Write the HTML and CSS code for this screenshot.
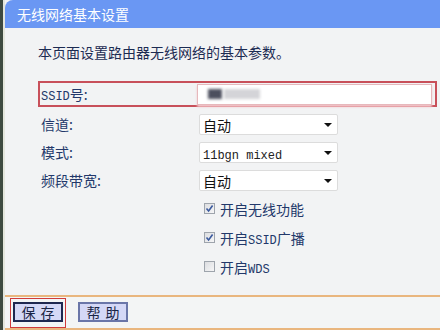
FILE: index.html
```html
<!DOCTYPE html>
<html lang="zh-CN">
<head>
    <meta charset="UTF-8">
    <meta name="viewport" content="width=device-width, initial-scale=1.0">
    <title>无线网络基本设置</title>
    <link rel="stylesheet" href="styles.css">
</head>
<body>
    <div class="frame">
        <div class="panel">
            <div class="panel-head">无线网络基本设置</div>

            <div class="panel-body">
                <p class="intro">本页面设置路由器无线网络的基本参数。</p>

                <!-- SSID -->
                <div class="row ssid-row">
                    <span class="label"><span class="latin">SSID</span>号:</span>
                    <div class="ssid-input">
                        <span class="blur blur-dark"></span>
                        <span class="blur blur-light"></span>
                    </div>
                </div>

                <!-- Selects -->
                <div class="row">
                    <span class="label">信道:</span>
                    <div class="select">自动<span class="caret"></span></div>
                </div>
                <div class="row">
                    <span class="label">模式:</span>
                    <div class="select"><span class="latin">11bgn mixed</span><span class="caret"></span></div>
                </div>
                <div class="row">
                    <span class="label">频段带宽:</span>
                    <div class="select">自动<span class="caret"></span></div>
                </div>

                <!-- Checkboxes -->
                <div class="row check-row">
                    <span class="label"></span>
                    <label class="check">
                        <span class="box"><svg width="9" height="9" viewBox="0 0 9 9"><path d="M1.5 4.5 L3.6 7 L7.6 1.5" fill="none" stroke="#3b5a9e" stroke-width="1.6"/></svg></span>
                        <span>开启无线功能</span>
                    </label>
                </div>
                <div class="row check-row">
                    <span class="label"></span>
                    <label class="check">
                        <span class="box"><svg width="9" height="9" viewBox="0 0 9 9"><path d="M1.5 4.5 L3.6 7 L7.6 1.5" fill="none" stroke="#3b5a9e" stroke-width="1.6"/></svg></span>
                        <span>开启<span class="latin">SSID</span>广播</span>
                    </label>
                </div>
                <div class="row check-row">
                    <span class="label"></span>
                    <label class="check">
                        <span class="box"></span>
                        <span>开启<span class="latin">WDS</span></span>
                    </label>
                </div>
            </div>

            <div class="panel-foot">
                <span class="focus-ring"><button class="btn btn-save">保 存</button></span>
                <button class="btn">帮 助</button>
            </div>
        </div>
    </div>
</body>
</html>
```

FILE: styles.css
```css
body {
    margin: 0;
    padding: 0;
    background-color: #f2f3f4;
    font-family: "Noto Sans CJK SC", "DejaVu Sans", sans-serif;
    font-size: 14px;
    color: #22386a;
}

.frame {
    border-left: 3px solid #3e4a40;
    background: #e4e6dc;
    height: 330px;
    overflow: hidden;
}

.panel {
    margin-left: 2px;
    background: #f2f3f4;
}

.panel-head {
    height: 28px;
    line-height: 28px;
    padding-left: 12px;
    background: #6a97f3;
    color: #fff;
    border-top-left-radius: 8px;
}

.panel-body {
    padding: 14px 3px 14px 33px;
}

.intro {
    margin: 0 0 19px;
    line-height: 20px;
    color: #1c2b52;
}

.latin {
    font-family: "Liberation Mono", monospace;
    font-size: 12px;
}

.row {
    display: flex;
    align-items: center;
    height: 28px;
    box-sizing: border-box;
    border: 2px solid transparent;
    padding: 0 1px;
}

.label {
    width: 158px;
    flex-shrink: 0;
}

.ssid-row {
    height: 26px;
    margin-bottom: 3px;
    border-color: #c8505a;
}

.ssid-input {
    position: relative;
    flex: 1;
    height: 19px;
    margin-left: -2px;
    margin-right: 2px;
    background: #fff;
    border: 1px solid #e6b8bc;
    box-shadow: 0 2px 2px #f3c8cc;
}

.blur {
    position: absolute;
    top: 4px;
    height: 10px;
    filter: blur(1.5px);
}

.blur-dark {
    left: 10px;
    width: 14px;
    background: #4c4f5e;
}

.blur-light {
    left: 26px;
    width: 36px;
    background: #d4d4d8;
}

.select {
    position: relative;
    width: 139px;
    height: 21px;
    line-height: 21px;
    box-sizing: border-box;
    padding-left: 3px;
    background: #fff;
    border: 1px solid #dcdcdc;
    border-radius: 2px;
    color: #111;
}

.select .latin {
    color: #222;
}

.caret {
    position: absolute;
    right: 5px;
    top: 8px;
    border-left: 4px solid transparent;
    border-right: 4px solid transparent;
    border-top: 4px solid #111;
}

.check-row {
    height: 29px;
}

.check {
    display: flex;
    align-items: center;
    gap: 5px;
    padding-left: 5px;
}

.box {
    display: flex;
    align-items: center;
    justify-content: center;
    width: 11px;
    height: 11px;
    box-sizing: border-box;
    border: 1px solid #9ea4ac;
    background: linear-gradient(135deg, #dcdde0, #f6f6f7);
}

.panel-foot {
    display: flex;
    align-items: flex-start;
    gap: 12px;
    height: 30px;
    padding: 1px 0 0 5px;
    border-top: 2px solid #e9b67e;
    border-bottom: 2px solid #e9b67e;
    background: #f3f5f5;
}

.focus-ring {
    display: flex;
    padding: 3px 2px 5px;
    border: 1px solid #d03a3a;
}

.btn {
    width: 50px;
    height: 20px;
    margin-top: 4px;
    padding: 0;
    font-family: "Noto Sans CJK SC", sans-serif;
    font-size: 14px;
    line-height: 16px;
    color: #1a2545;
    word-spacing: 2px;
    background: #d4d8f6;
    border: 2px solid #6a76a8;
}

.btn-save {
    margin-top: 0;
    border-color: #1e2850;
}
```
